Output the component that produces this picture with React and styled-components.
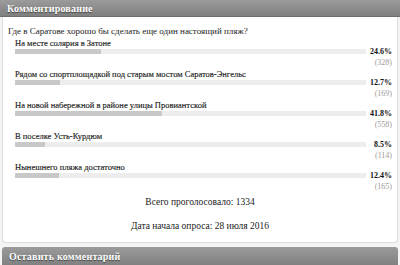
import React from "react";
import styled, { createGlobalStyle } from "styled-components";

const Global = createGlobalStyle`
  html, body { margin: 0; padding: 0; background: #f4f4f4; }
  body { font-family: "Liberation Serif", "DejaVu Serif", serif; color: #222; }
`;

const Page = styled.div`
  width: 400px;
  height: 265px;
  overflow: hidden;
  background: #f4f4f4;
  display: flex;
  flex-direction: column;
`;

const Header = styled.div`
  height: ${(p) => p.$h || 17}px;
  margin: 0 ${(p) => p.$inset || 0}px;
  box-sizing: border-box;
  background: linear-gradient(#9b9b9b, #7f7f7f);
  border-bottom: 1px solid #6d6d6d;
  border-radius: ${(p) => (p.$rounded ? "3px 3px 0 0" : "0")};
  color: #fff;
  font-weight: bold;
  font-size: 10px;
  letter-spacing: 0.2px;
  padding: ${(p) => p.$pt || 3}px 0 0 7px;
  text-shadow: 0 1px 1px rgba(0, 0, 0, 0.5);
  flex-shrink: 0;
`;

const Panel = styled.div`
  margin: 0 2px;
  background: #fff;
  border: 1px solid #dcdcdc;
  border-top: none;
  border-radius: 0 0 4px 4px;
  padding: 9px 0 10px 0;
  box-sizing: border-box;
  height: 231px;
`;

const Question = styled.div`
  font-size: 9px;
  padding-left: 5px;
  line-height: 11px;
`;

const Row = styled.div`
  display: flex;
  align-items: flex-start;
  padding-left: 12px;
  height: 31px;
`;

const Main = styled.div`
  width: 351px;
  display: flex;
  flex-direction: column;
`;

const Label = styled.div`
  font-size: 8.5px;
  line-height: 10px;
  color: #222;
  padding-top: 1px;
  font-weight: normal;
  -webkit-text-stroke: 0.15px #222;
`;

const Track = styled.div`
  margin-top: 1px;
  height: 5px;
  background: #ededed;
  display: flex;
`;

const Fill = styled.div`
  background: #c8c8c8;
  height: 100%;
`;

const Stats = styled.div`
  flex: 1;
  padding-top: 10px;
  padding-right: 5px;
  text-align: right;
  display: flex;
  flex-direction: column;
  align-items: flex-end;
`;

const Pct = styled.div`
  font-size: 8px;
  font-weight: bold;
  line-height: 10px;
  color: #111;
`;

const Count = styled.div`
  font-size: 8px;
  line-height: 11px;
  color: #9a9a9a;
`;

const Summary = styled.div`
  text-align: center;
  font-size: 9.5px;
  line-height: 12px;
  margin-top: ${(p) => p.$mt}px;
`;

const Gap = styled.div`
  height: 4px;
  flex-shrink: 0;
`;

const items = [
  { label: "На месте солярия в Затоне", pct: 24.6, count: 328 },
  { label: "Рядом со спортплощадкой под старым мостом Саратов-Энгельс", pct: 12.7, count: 169 },
  { label: "На новой набережной в районе улицы Провиантской", pct: 41.8, count: 558 },
  { label: "В поселке Усть-Курдюм", pct: 8.5, count: 114 },
  { label: "Нынешнего пляжа достаточно", pct: 12.4, count: 165 },
];

export default function App() {
  return (
    <>
      <Global />
      <Page>
        <Header>Комментирование</Header>
        <Panel>
          <Question>Где в Саратове хорошо бы сделать еще один настоящий пляж?</Question>
          {items.map((it) => (
            <Row key={it.label}>
              <Main>
                <Label>{it.label}</Label>
                <Track>
                  <Fill style={{ width: `${it.pct}%` }} />
                </Track>
              </Main>
              <Stats>
                <Pct>{it.pct}%</Pct>
                <Count>({it.count})</Count>
              </Stats>
            </Row>
          ))}
          <Summary $mt={4}>Всего проголосовало: 1334</Summary>
          <Summary $mt={12}>Дата начала опроса: 28 июля 2016</Summary>
        </Panel>
        <Gap />
        <Header $inset={2} $rounded $h={20} $pt={4}>Оставить комментарий</Header>
      </Page>
    </>
  );
}
